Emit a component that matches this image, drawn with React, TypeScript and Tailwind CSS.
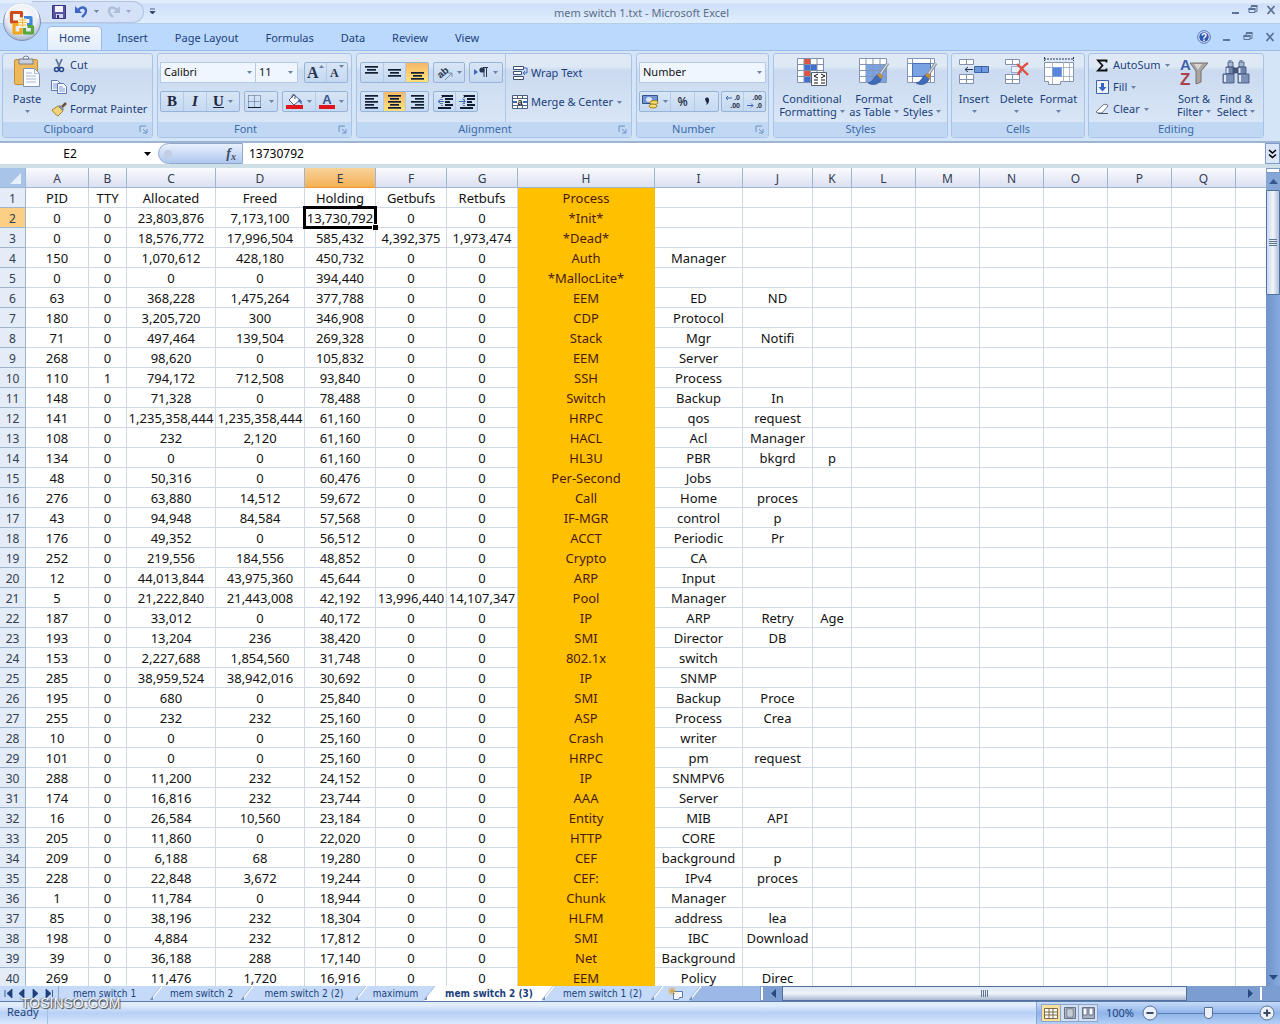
import type { ReactNode } from "react";
import clsx from "clsx";

const columns = [
  { name: "A", width: 63 },
  { name: "B", width: 38 },
  { name: "C", width: 89 },
  { name: "D", width: 89 },
  { name: "E", width: 71 },
  { name: "F", width: 71 },
  { name: "G", width: 71 },
  { name: "H", width: 137 },
  { name: "I", width: 88 },
  { name: "J", width: 70 },
  { name: "K", width: 39 },
  { name: "L", width: 64 },
  { name: "M", width: 64 },
  { name: "N", width: 64 },
  { name: "O", width: 64 },
  { name: "P", width: 64 },
  { name: "Q", width: 64 },
];

const rows = [
  "PID|TTY|Allocated|Freed|Holding|Getbufs|Retbufs|Process",
  "0|0|23,803,876|7,173,100|13,730,792|0|0|*Init*",
  "0|0|18,576,772|17,996,504|585,432|4,392,375|1,973,474|*Dead*",
  "150|0|1,070,612|428,180|450,732|0|0|Auth|Manager",
  "0|0|0|0|394,440|0|0|*MallocLite*",
  "63|0|368,228|1,475,264|377,788|0|0|EEM|ED|ND",
  "180|0|3,205,720|300|346,908|0|0|CDP|Protocol",
  "71|0|497,464|139,504|269,328|0|0|Stack|Mgr|Notifi",
  "268|0|98,620|0|105,832|0|0|EEM|Server",
  "110|1|794,172|712,508|93,840|0|0|SSH|Process",
  "148|0|71,328|0|78,488|0|0|Switch|Backup|In",
  "141|0|1,235,358,444|1,235,358,444|61,160|0|0|HRPC|qos|request",
  "108|0|232|2,120|61,160|0|0|HACL|Acl|Manager",
  "134|0|0|0|61,160|0|0|HL3U|PBR|bkgrd|p",
  "48|0|50,316|0|60,476|0|0|Per-Second|Jobs",
  "276|0|63,880|14,512|59,672|0|0|Call|Home|proces",
  "43|0|94,948|84,584|57,568|0|0|IF-MGR|control|p",
  "176|0|49,352|0|56,512|0|0|ACCT|Periodic|Pr",
  "252|0|219,556|184,556|48,852|0|0|Crypto|CA",
  "12|0|44,013,844|43,975,360|45,644|0|0|ARP|Input",
  "5|0|21,222,840|21,443,008|42,192|13,996,440|14,107,347|Pool|Manager",
  "187|0|33,012|0|40,172|0|0|IP|ARP|Retry|Age",
  "193|0|13,204|236|38,420|0|0|SMI|Director|DB",
  "153|0|2,227,688|1,854,560|31,748|0|0|802.1x|switch",
  "285|0|38,959,524|38,942,016|30,692|0|0|IP|SNMP",
  "195|0|680|0|25,840|0|0|SMI|Backup|Proce",
  "255|0|232|232|25,160|0|0|ASP|Process|Crea",
  "10|0|0|0|25,160|0|0|Crash|writer",
  "101|0|0|0|25,160|0|0|HRPC|pm|request",
  "288|0|11,200|232|24,152|0|0|IP|SNMPV6",
  "174|0|16,816|232|23,744|0|0|AAA|Server",
  "16|0|26,584|10,560|23,184|0|0|Entity|MIB|API",
  "205|0|11,860|0|22,020|0|0|HTTP|CORE",
  "209|0|6,188|68|19,280|0|0|CEF|background|p",
  "228|0|22,848|3,672|19,244|0|0|CEF:|IPv4|proces",
  "1|0|11,784|0|18,944|0|0|Chunk|Manager",
  "85|0|38,196|232|18,304|0|0|HLFM|address|lea",
  "198|0|4,884|232|17,812|0|0|SMI|IBC|Download",
  "39|0|36,188|288|17,140|0|0|Net|Background",
  "269|0|11,476|1,720|16,916|0|0|EEM|Policy|Direc",
].map((line) => line.split("|"));

const ribbonTabs = ["Home", "Insert", "Page Layout", "Formulas", "Data", "Review", "View"];

const sheetTabs = [
  { name: "mem switch 1", width: "w-[91px]" },
  { name: "mem switch 2", width: "w-[79px]" },
  { name: "mem switch 2 (2)", width: "w-[102px]" },
  { name: "maximum", width: "w-[57px]" },
  { name: "mem switch 2 (3)", width: "w-[106px]" },
  { name: "mem switch 1 (2)", width: "w-[97px]" },
];
const activeSheet = "mem switch 2 (3)";

function Caret({ className }: { className?: string }) {
  return (
    <svg viewBox="0 0 5 3" className={clsx("h-[3px] w-[5px] shrink-0 fill-[#6a82a8]", className)} aria-hidden>
      <path d="M0 0h5L2.5 3z" />
    </svg>
  );
}

function Icon({ w, h, children }: { w: number; h: number; children: ReactNode }) {
  return (
    <svg
      width={w}
      height={h}
      viewBox={`0 0 ${w} ${h}`}
      className="shrink-0 overflow-visible font-['Liberation_Sans']"
      aria-hidden
    >
      {children}
    </svg>
  );
}

function Group({
  title,
  width,
  launcher,
  children,
}: {
  title: string;
  width: string;
  launcher?: boolean;
  children: ReactNode;
}) {
  return (
    <section
      className={clsx(
        "flex h-[85px] shrink-0 flex-col overflow-hidden rounded-[3px] border border-[#a9c3e6] bg-gradient-to-b from-[#dfe9f6] from-15% via-[#cbdaef] via-20% to-[#dce9f9]",
        width
      )}
    >
      <div className="flex min-h-0 flex-1">{children}</div>
      <footer
        className={clsx(
          "relative flex h-[15px] items-center justify-center bg-[#c0d8f3] text-[#3e6aaa]",
          launcher && "pr-[18px]"
        )}
      >
        <span>{title}</span>
        {launcher && (
          <button aria-label={`${title} options`} className="absolute right-1">
            <Icon w={9} h={9}>
              <path d="M1 7V1h6M4 4l3 3M8 4v4H4" fill="none" stroke="#6d8fc0" />
            </Icon>
          </button>
        )}
      </footer>
    </section>
  );
}

function Cluster({ children, className }: { children: ReactNode; className?: string }) {
  return (
    <div
      className={clsx(
        "flex h-[21px] items-stretch divide-x divide-[#b3cbe9] rounded-[2px] border border-[#96b3d9] bg-gradient-to-b from-[#d8e5f5] to-[#c5d9f1]",
        className
      )}
    >
      {children}
    </div>
  );
}

function Tool({
  label,
  active,
  className,
  children,
}: {
  label: string;
  active?: boolean;
  className?: string;
  children: ReactNode;
}) {
  return (
    <button
      aria-label={label}
      className={clsx(
        "flex items-center justify-center leading-none",
        active && "bg-gradient-to-b from-[#f5b868] to-[#ffe27a]",
        className ?? "flex-1 gap-1"
      )}
    >
      {children}
    </button>
  );
}

function SmallButton({ icon, label, caret }: { icon: ReactNode; label: string; caret?: boolean }) {
  return (
    <button className="flex h-[22px] items-center gap-[3px] whitespace-nowrap">
      <span className="flex w-4 justify-center">{icon}</span>
      <span>{label}</span>
      {caret && <Caret className="ml-px" />}
    </button>
  );
}

function LargeButton({
  icon,
  lines,
  width,
}: {
  icon: ReactNode;
  lines: [string, string?];
  width: string;
}) {
  return (
    <button className={clsx("flex h-full flex-col items-center pt-[2px] whitespace-nowrap", width)}>
      <span className="flex h-8 items-center">{icon}</span>
      <span className="mt-1 leading-[13px]">{lines[0]}</span>
      <span className="flex h-[13px] items-center gap-[3px] leading-[13px]">
        {lines[1]}
        <Caret />
      </span>
    </button>
  );
}

function Lines({ rows: ys, align = "center" }: { rows: number[]; align?: "left" | "center" | "right" }) {
  return (
    <Icon w={15} h={15}>
      {ys.map((y, i) => {
        const len = i % 2 ? 9 : 13;
        const x = align === "left" ? 1 : align === "right" ? 14 - len : (15 - len) / 2;
        return <rect key={y} x={x} y={y} width={len} height="1.7" fill="#111d33" />;
      })}
    </Icon>
  );
}

function IndentIcon({ flip }: { flip?: boolean }) {
  return (
    <Icon w={16} h={14}>
      <path d="M5 1h11M8 4h8M8 7h5M8 10h8M1 13h13" stroke="#111d33" strokeWidth="1.8" />
      <path d="M5 0v14" stroke="#111d33" strokeDasharray="1 1" />
      <path d={flip ? "M0 6.5h6M3.500 4l3 2.500-3 2.500" : "M7 6.500H1M4 4L1 6.500 4 9"} stroke="#3c69bd" fill="none" />
    </Icon>
  );
}

function OfficeLogo() {
  return (
    <svg viewBox="0 0 40 40" className="size-10" aria-hidden>
      <defs>
        <radialGradient id="orb" cx="50%" cy="35%" r="65%">
          <stop offset="0" stopColor="#ffffff" />
          <stop offset="0.65" stopColor="#e6eaf3" />
          <stop offset="1" stopColor="#a6b4ce" />
        </radialGradient>
      </defs>
      <circle cx="20" cy="20" r="18.500" fill="url(#orb)" stroke="#7f92b4" />
      <path d="M4 16a16 14 0 0 1 32 0" fill="none" stroke="#fff" strokeWidth="2" opacity=".8" />
      <g fill="none" strokeWidth="3.200" strokeLinejoin="round">
        <path d="M16 20H9.500v-9.500h10v5" stroke="#cf4a1c" />
        <path d="M22 15.500h7v7h-4" stroke="#3f86d6" />
        <path d="M18 22.500h-6V31h7v-5" stroke="#f2a81d" />
        <path d="M22.500 26v5h8v-6.500h-5" stroke="#59a63a" />
      </g>
      <rect x="16.500" y="16.500" width="8" height="8" fill="#fff4d0" />
      <path d="M16 20.500h9M20.500 16v9M17 18h7M17 23h7" stroke="#f0b030" strokeWidth=".8" />
    </svg>
  );
}

function WindowButtons({ className }: { className?: string }) {
  return (
    <div className={clsx("flex items-center text-[#5d7396]", className)}>
      <button aria-label="Minimize">
        <Icon w={9} h={10}>
          <path d="M1 8h7" stroke="currentColor" strokeWidth="2" />
        </Icon>
      </button>
      <button aria-label="Restore">
        <Icon w={10} h={10}>
          <path d="M3 3V1.500h6v5H7" fill="none" stroke="currentColor" />
          <path d="M1 3.500h6v4H1z" fill="none" stroke="currentColor" />
          <path d="M3 1h6.500M.5 4h7" stroke="currentColor" strokeWidth="2" />
        </Icon>
      </button>
      <button aria-label="Close">
        <Icon w={10} h={10}>
          <path d="M1.500 1l7 8M8.500 1l-7 8" stroke="currentColor" strokeWidth="1.800" />
        </Icon>
      </button>
    </div>
  );
}

function TitleBar() {
  return (
    <header className="flex h-6 shrink-0 items-center justify-between border-b border-[#b4cdea] bg-gradient-to-b from-[#e2edfd] from-10% via-[#cfdff9] via-20% to-[#e0effd] pl-8">
      <div className="flex h-[22px] w-28 items-center rounded-r-full border border-l-0 border-[#b3c5e3] bg-[#d4e1f6] pl-5">
        <button aria-label="Save" className="mr-[9px]">
          <Icon w={14} h={14}>
            <path d="M.5.5h13v13h-13z" fill="#5a54a8" stroke="#37347e" />
            <path d="M3 1h8v6H3z" fill="#f3f5fd" />
            <path d="M4 9h7v4H4z" fill="#cfd4e8" />
            <path d="M5 10h2v3H5z" fill="#2f2c70" />
          </Icon>
        </button>
        <button aria-label="Undo" className="flex items-center gap-[6px]">
          <Icon w={13} h={13}>
            <path d="M3 5.500C6 1 11 2 11 6c0 3-2 4-4 6" fill="none" stroke="#3f66c0" strokeWidth="2.400" />
            <path d="M0 1v7h7z" fill="#3f66c0" />
          </Icon>
          <Caret />
        </button>
        <button aria-label="Redo" className="ml-2 flex items-center gap-[6px] opacity-60">
          <Icon w={13} h={13}>
            <path d="M10 5.500C7 1 2 2 2 6c0 3 2 4 4 6" fill="none" stroke="#98a9c7" strokeWidth="2.400" />
            <path d="M13 1v7H6z" fill="#98a9c7" />
          </Icon>
          <Caret />
        </button>
      </div>
      <button aria-label="Customize toolbar" className="ml-[5px]">
        <Icon w={7} h={7}>
          <path d="M1 1h5M1 3.500h5L3.500 6z" fill="#2a3f66" stroke="#2a3f66" strokeWidth=".8" />
        </Icon>
      </button>
      <h1 className="flex-1 pt-1 pr-[104px] text-center text-[#5c6c86]">mem switch 1.txt - Microsoft Excel</h1>
      <WindowButtons className="gap-2 pr-1 pb-1" />
    </header>
  );
}

function RibbonTabs() {
  return (
    <nav className="flex h-[26px] shrink-0 items-end bg-[#bbd9fd] pl-12">
      <div className="flex flex-1 items-end gap-[5px]">
        {ribbonTabs.map((tab, i) => (
          <button
            key={tab}
            className={clsx(
              "h-[23px] px-[11px] whitespace-nowrap",
              i === 0 && "rounded-t-[3px] bg-gradient-to-b from-[#f6fafe] to-[#e3edf9] outline outline-[#9fbde4]"
            )}
          >
            {tab}
          </button>
        ))}
      </div>
      <div className="flex h-full items-center gap-[11px] pr-[5px]">
        <button aria-label="Help">
          <Icon w={14} h={14}>
            <circle cx="7" cy="7" r="6.300" fill="#e6eefb" stroke="#4a6cb4" />
            <circle cx="7" cy="7" r="4.800" fill="#2f58b4" />
            <text x="7" y="10.500" textAnchor="middle" fontSize="10" fontWeight="700" fill="#fff">
              ?
            </text>
          </Icon>
        </button>
        <WindowButtons className="gap-3" />
      </div>
    </nav>
  );
}

function ClipboardGroup() {
  return (
    <Group title="Clipboard" width="w-[151px]" launcher>
      <LargeButton
        width="w-12"
        lines={["Paste"]}
        icon={
          <Icon w={28} h={32}>
            <rect x="1.500" y="3.500" width="23" height="25" rx="1.500" fill="#ecb95c" stroke="#c78f35" />
            <path d="M6 3h14v5H6z" fill="#c9cfdb" stroke="#76808f" />
            <path d="M10 3a3 3 0 0 1 6 0z" fill="#eef1f6" stroke="#76808f" />
            <path d="M10.500 12.500h11l5 5v13h-16z" fill="#fbfdff" stroke="#8093b5" />
            <path d="M21.500 12.500v5h5M13 17h6M13 20h10M13 23h10M13 26h10" fill="none" stroke="#a6b8d8" />
          </Icon>
        }
      />
      <div className="flex flex-col">
        <SmallButton
          label="Cut"
          icon={
            <Icon w={14} h={15}>
              <path d="M4 1l4 9M10 1L6 10" stroke="#62779e" strokeWidth="1.800" />
              <circle cx="4.500" cy="11.500" r="2" fill="none" stroke="#2c4888" strokeWidth="1.500" />
              <circle cx="9.500" cy="11.500" r="2" fill="none" stroke="#2c4888" strokeWidth="1.500" />
            </Icon>
          }
        />
        <SmallButton
          label="Copy"
          icon={
            <Icon w={16} h={14}>
              <path d="M.5.5h6l3 3v7h-9z" fill="#f5f9ff" stroke="#5b7bb2" />
              <path d="M2 4h4M2 6h5M2 8h5" stroke="#7c9bd0" />
              <path d="M6.500 3.500h6l3 3v7h-9z" fill="#f5f9ff" stroke="#5b7bb2" />
              <path d="M8 7h4M8 9h6M8 11h6" stroke="#7c9bd0" />
            </Icon>
          }
        />
        <SmallButton
          label="Format Painter"
          icon={
            <Icon w={16} h={15}>
              <path d="M1 8l6-4 5 5-5 5c-2-1-4-3-6-6z" fill="#f2d478" stroke="#a4822f" />
              <path d="M7 4l2-1 4 4-1 2z" fill="#8391a8" />
              <path d="M11 5l4-4" stroke="#6b5533" strokeWidth="2.500" />
            </Icon>
          }
        />
      </div>
    </Group>
  );
}

function FontGroup() {
  return (
    <Group title="Font" width="w-[195px]" launcher>
      <div className="flex flex-1 flex-col gap-2 px-[2px] pt-2">
        <div className="flex items-center">
          <label className="relative flex h-[21px] w-24 items-center border border-[#b3cbe9] bg-[#f0f6ff]">
            <select aria-label="Font" className="h-full w-full appearance-none pl-[3px] text-[#111]">
              <option>Calibri</option>
            </select>
            <Caret className="pointer-events-none absolute right-[3px]" />
          </label>
          <label className="relative flex h-[21px] w-[42px] items-center border border-l-0 border-[#b3cbe9] bg-[#f0f6ff]">
            <select aria-label="Font size" className="h-full w-full appearance-none pl-[3px] text-[#111]">
              <option>11</option>
            </select>
            <Caret className="pointer-events-none absolute right-1" />
          </label>
          <Cluster className="ml-[6px] w-[44px] font-['Liberation_Serif'] font-bold text-[#27344f]">
            <Tool label="Grow font" className="flex-1">
              <span className="text-base leading-none">A</span>
              <Caret className="mb-3 rotate-180" />
            </Tool>
            <Tool label="Shrink font" className="flex-1">
              <span className="text-xs leading-none">A</span>
              <Caret className="mb-3" />
            </Tool>
          </Cluster>
        </div>
        <div className="flex items-center gap-1 font-['Liberation_Serif'] text-[15px] font-bold text-[#1c2740]">
          <Cluster className="w-20">
            <Tool label="Bold" className="w-[23px]">
              B
            </Tool>
            <Tool label="Italic" className="w-[23px] italic">
              I
            </Tool>
            <Tool label="Underline">
              <span className="underline">U</span>
              <Caret />
            </Tool>
          </Cluster>
          <Cluster className="w-[34px]">
            <Tool label="Borders">
              <Icon w={13} h={13}>
                <path d="M.5.5h12v12M.5.5v12M6.500.5v12M.5 6.500h12" fill="none" stroke="#4e6388" strokeDasharray="1 1" />
                <path d="M0 12.500h13" stroke="#111d33" />
              </Icon>
              <Caret className="ml-1" />
            </Tool>
          </Cluster>
          <Cluster className="w-[66px]">
            <Tool label="Fill color">
              <Icon w={17} h={15}>
                <path d="M3 6l5-5 6 5-6 5z" fill="#f7f9fd" stroke="#4b5f85" />
                <path d="M6 4V1.500C6 0 9 0 9 1.500V5" fill="none" stroke="#4b5f85" />
                <path d="M13 5c3 1 3 3 2.500 5.500C14 9 14 8 12 7z" fill="#3d65b0" />
                <path d="M0 11h17v4H0z" fill="#e0141c" />
              </Icon>
              <Caret />
            </Tool>
            <Tool label="Font color">
              <Icon w={16} h={15}>
                <text x="8" y="10" textAnchor="middle" fontSize="13" fill="#3b5591">
                  A
                </text>
                <path d="M0 11h16v4H0z" fill="#e0141c" />
              </Icon>
              <Caret />
            </Tool>
          </Cluster>
        </div>
      </div>
    </Group>
  );
}

function AlignmentGroup() {
  return (
    <Group title="Alignment" width="w-[276px]" launcher>
      <div className="flex w-[149px] flex-col gap-2 border-r border-[#b0c8e6] pt-2 pl-[3px]">
        <div className="flex gap-1">
          <Cluster className="w-[69px]">
            <Tool label="Top align">
              <Lines rows={[1, 4, 7]} />
            </Tool>
            <Tool label="Middle align">
              <Lines rows={[4, 7, 10]} />
            </Tool>
            <Tool label="Bottom align" active>
              <Lines rows={[7, 10, 13]} />
            </Tool>
          </Cluster>
          <Cluster className="w-8">
            <Tool label="Orientation">
              <Icon w={16} h={15}>
                <text x="1" y="11" fontSize="10" fontWeight="700" fill="#26344f" transform="rotate(-40 6 9)">
                  ab
                </text>
                <path d="M8 15l7-7M15 12V8h-4" fill="none" stroke="#7b8ba8" />
              </Icon>
              <Caret />
            </Tool>
          </Cluster>
          <Cluster className="w-[34px]">
            <Tool label="Text direction">
              <Icon w={15} h={13}>
                <path d="M0 3l4 3-4 3z" fill="#3f66c0" />
                <path d="M9 1.500h5M10 1v10M12.500 1v10" stroke="#26344f" fill="none" />
                <circle cx="8" cy="4" r="2.600" fill="#26344f" />
              </Icon>
              <Caret />
            </Tool>
          </Cluster>
        </div>
        <div className="flex gap-1">
          <Cluster className="w-[69px]">
            <Tool label="Align left">
              <Lines rows={[1, 4, 7, 10, 13]} align="left" />
            </Tool>
            <Tool label="Center" active>
              <Lines rows={[1, 4, 7, 10, 13]} />
            </Tool>
            <Tool label="Align right">
              <Lines rows={[1, 4, 7, 10, 13]} align="right" />
            </Tool>
          </Cluster>
          <Cluster className="w-[45px]">
            <Tool label="Decrease indent">
              <IndentIcon />
            </Tool>
            <Tool label="Increase indent">
              <IndentIcon flip />
            </Tool>
          </Cluster>
        </div>
      </div>
      <div className="flex flex-col gap-[7px] pt-2 pl-[6px]">
        <SmallButton
          label="Wrap Text"
          icon={
            <Icon w={16} h={14}>
              <path d="M1.500.5h10v3h-10zM1.500 5.500h8v3h-8zM1.500 10.500h10v3h-10z" fill="#fff" stroke="#3d4f70" />
              <path d="M12 2h3v5h-4M13 5l-2 2 2 2" fill="none" stroke="#3c69bd" />
            </Icon>
          }
        />
        <SmallButton
          label="Merge & Center"
          caret
          icon={
            <Icon w={16} h={14}>
              <path d="M.5.5h15v13H.5zM.5 3.500h15M.5 10.500h15M5.500.5v3M10.500.5v3M5.500 10.500v3M10.500 10.500v3" fill="#fff" stroke="#4c607f" />
              <path d="M1 7h4M15 7h-4" stroke="#3c69bd" strokeWidth="2" />
              <text x="8" y="9.500" textAnchor="middle" fontSize="9" fontWeight="700" fill="#111">
                a
              </text>
            </Icon>
          }
        />
      </div>
    </Group>
  );
}

function NumberGroup() {
  return (
    <Group title="Number" width="w-[133px]" launcher>
      <div className="flex flex-1 flex-col gap-2 px-[2px] pt-2">
        <label className="relative flex h-[21px] items-center border border-[#b3cbe9] bg-[#f0f6ff]">
          <select aria-label="Number format" className="h-full w-full appearance-none pl-[3px] text-[#111]">
            <option>Number</option>
          </select>
          <Caret className="pointer-events-none absolute right-[3px]" />
        </label>
        <div className="flex justify-between">
          <Cluster className="w-20 text-[#1c2740]">
            <Tool label="Accounting format" className="w-[31px] gap-1">
              <Icon w={17} h={15}>
                <path d="M.5 1.500h15v8H.5z" fill="#6f94cf" stroke="#34538c" />
                <ellipse cx="7" cy="5.500" rx="3" ry="2.500" fill="#d9e6fa" />
                <ellipse cx="12" cy="8.500" rx="4" ry="2" fill="#f8dc74" stroke="#a47d1c" />
                <ellipse cx="11" cy="12" rx="4" ry="2" fill="#f8dc74" stroke="#a47d1c" />
              </Icon>
              <Caret />
            </Tool>
            <Tool label="Percent style" className="flex-1 text-xs font-medium">
              %
            </Tool>
            <Tool label="Comma style">
              <Icon w={6} h={10}>
                <path d="M1 2a2 2 0 1 1 4 1c0 3-1 4-3 5 1-2 1-3 0-3z" fill="#1c2740" />
              </Icon>
            </Tool>
          </Cluster>
          <Cluster className="w-[45px] text-[#1c2740]">
            <Tool label="Increase decimal">
              <Icon w={17} h={17}>
                <path d="M8 5H2M4 3L2 5l2 2" fill="none" stroke="#3c69bd" />
                <text x="16" y="7" textAnchor="end" fontSize="7" fontWeight="700" fill="#1c2740">.0</text>
                <text x="16" y="15" textAnchor="end" fontSize="7" fontWeight="700" fill="#1c2740">.00</text>
              </Icon>
            </Tool>
            <Tool label="Decrease decimal">
              <Icon w={17} h={17}>
                <text x="16" y="7" textAnchor="end" fontSize="7" fontWeight="700" fill="#1c2740">.00</text>
                <text x="16" y="15" textAnchor="end" fontSize="7" fontWeight="700" fill="#1c2740">.0</text>
                <path d="M1 12.500h6M5 10.500l2 2-2 2" fill="none" stroke="#3c69bd" />
              </Icon>
            </Tool>
          </Cluster>
        </div>
      </div>
    </Group>
  );
}

function Brush() {
  return (
    <>
      <path d="M30 6l-9 13" stroke="#8a93a3" strokeWidth="3.400" />
      <path d="M30 6l-9 13" stroke="#dfe3ea" strokeWidth="1.200" />
      <path d="M21 17c-5 1-5 8-11 9 5 3 12 2 14-6z" fill="#3f6cb8" stroke="#2c4f8e" strokeWidth=".6" />
      <path d="M19 18l4 4 2-3-3-3z" fill="#c58c3a" />
    </>
  );
}

function StylesGroup() {
  return (
    <Group title="Styles" width="w-[175px]">
      <LargeButton
        width="w-[76px]"
        lines={["Conditional", "Formatting"]}
        icon={
          <Icon w={32} h={30}>
            <path d="M1.500 1.500h26v24h-26z" fill="#fff" />
            <path d="M8 1.500h7v6H8zM8 13.500h7v6H8z" fill="#e4523f" />
            <path d="M8 7.500h13v6H8zM8 19.500h6v6H8z" fill="#3f6fd0" />
            <path d="M1.500 1.500h26v24h-26zM8 1.500v24M14.500 1.500v24M21 1.500v24M1.500 7.500h26M1.500 13.500h26M1.500 19.500h26" fill="none" stroke="#7f8fae" />
            <path d="M15.500 15.500h15v13h-15z" fill="#fff" stroke="#555f70" />
            <path d="M22 17l-4 2 4 2M18 23h4M18 26h4M25 17l4 2-4 2M25 23h4M25 26h4" fill="none" stroke="#111" />
          </Icon>
        }
      />
      <LargeButton
        width="w-12"
        lines={["Format", "as Table"]}
        icon={
          <Icon w={32} h={30}>
            <path d="M1.500 1.500h27v24h-27z" fill="#fff" />
            <path d="M8 7.500h20.500v18H8z" fill="#7aa3e4" />
            <path d="M1.500 1.500h27v24h-27zM8 1.500v24M15 1.500v24M22 1.500v24M1.500 7.500h27M1.500 13.500h27M1.500 19.500h27" fill="none" stroke="#8496b8" />
            <Brush />
          </Icon>
        }
      />
      <LargeButton
        width="w-12"
        lines={["Cell", "Styles"]}
        icon={
          <Icon w={32} h={30}>
            <path d="M1.500 1.500h27v24h-27z" fill="#fff" />
            <path d="M1.500 1.500h27v24h-27zM6.500 1.500v24M1.500 6.500h27M1.500 19.500h27M24.500 1.500v24" fill="none" stroke="#8496b8" />
            <path d="M6.500 6.500h18v13h-18z" fill="#7aa3e4" stroke="#4b70b4" />
            <Brush />
          </Icon>
        }
      />
    </Group>
  );
}

function CellsGroup() {
  return (
    <Group title="Cells" width="w-[134px]">
      <div className="flex flex-1 justify-center pr-1">
        <LargeButton
          width="w-[43px]"
          lines={["Insert"]}
          icon={
            <Icon w={32} h={28}>
              <path d="M1.500 1.500h14v5h-14zM8.500 1.500v5M1.500 16.500h14v9h-14zM8.500 16.500v9M1.500 21.500h14" fill="#fff" stroke="#8292ad" />
              <path d="M16.500 8.500h14v6h-14zM23.500 8.500v6" fill="#6d98e0" stroke="#3e62a6" />
              <path d="M15 11.500H7M10 9l-3 2.500 3 2.500" fill="none" stroke="#26344f" />
            </Icon>
          }
        />
        <LargeButton
          width="w-[42px]"
          lines={["Delete"]}
          icon={
            <Icon w={28} h={28}>
              <path d="M2.500 1.500h14v5h-14zM9.500 1.500v5M2.500 16.500h14v9h-14zM9.500 16.500v9M2.500 21.500h14" fill="#fff" stroke="#8292ad" />
              <path d="M8.500 8.500h10v6h-10z" fill="#e8f0fc" stroke="#4b70b4" strokeDasharray="1 1" />
              <path d="M14 6l11 11M25 5c-5 3-8 7-10 12" stroke="#e2503c" strokeWidth="2.400" fill="none" />
            </Icon>
          }
        />
        <LargeButton
          width="w-[42px]"
          lines={["Format"]}
          icon={
            <Icon w={32} h={30}>
              <path d="M1 2h30M1.500 0v4M30.500 0v4" stroke="#26344f" strokeDasharray="2 1" />
              <path d="M1.500 5.500h29v19h-13v3h-12v-3h-4z" fill="#fff" stroke="#8292ad" />
              <path d="M9.500 5v22M20.500 5v20M1.500 10.500h29M1.500 19.500h29M26.500 5v19" stroke="#a9b6cd" />
              <path d="M9.500 10.500h9v9h-9z" fill="#5685da" stroke="#7fa2e2" />
            </Icon>
          }
        />
      </div>
    </Group>
  );
}

function EditingGroup() {
  return (
    <Group title="Editing" width="w-[176px]">
      <div className="flex w-[83px] flex-col pl-[5px]">
        <SmallButton
          label="AutoSum"
          caret
          icon={
            <Icon w={12} h={13}>
              <path d="M10.500 3.500V1.500H2l4.500 5L2 11.500h8.500v-2" fill="none" stroke="#111" strokeWidth="1.800" />
            </Icon>
          }
        />
        <SmallButton
          label="Fill"
          caret
          icon={
            <Icon w={13} h={14}>
              <path d="M.5.5h12v13H.5z" fill="#edf3fc" stroke="#4462a0" />
              <path d="M5 3h3v4h2.500l-4 4.500L2.500 7H5z" fill="#3664c8" />
            </Icon>
          }
        />
        <SmallButton
          label="Clear"
          caret
          icon={
            <Icon w={15} h={12}>
              <path d="M1 9l7-7c1-1 5-1 5 1L7 10H3z" fill="#fff" stroke="#67758f" />
              <path d="M3 10.500h10" stroke="#4b5870" />
            </Icon>
          }
        />
      </div>
      <LargeButton
        width="w-[44px]"
        lines={["Sort &", "Filter"]}
        icon={
          <Icon w={30} h={30}>
            <path d="M11 6h18l-7 8v11l-5 2V14z" fill="#a9a49f" stroke="#77736f" />
            <path d="M15 7h8l-4 6z" fill="#d7d4d0" />
            <text x="1" y="13" fontSize="15" fontWeight="700" fill="#3f5fae">A</text>
            <text x="1" y="28" fontSize="17" fontWeight="700" fill="#a8434c">Z</text>
          </Icon>
        }
      />
      <LargeButton
        width="w-10"
        lines={["Find &", "Select"]}
        icon={
          <Icon w={28} h={28}>
            <g stroke="#3e4f74" strokeWidth=".8">
              <path d="M6 4h5v5H6zM17 4h5v5h-5z" fill="#a9b7d2" />
              <path d="M4 9h8v7H4zM16 9h8v7h-8z" fill="#6f83ab" />
              <path d="M11 10h6v5h-6z" fill="#42557f" />
              <path d="M1 16h11v9H1zM16 16h11v9H16z" fill="#7c90b8" />
            </g>
            <path d="M3 17v7M18 17v7M5.500 10v5M17.500 10v5" stroke="#dfe7f5" strokeWidth="2" />
            <path d="M8 2v2M19 2v2" stroke="#7c90b8" strokeWidth="3" />
          </Icon>
        }
      />
    </Group>
  );
}

function Ribbon() {
  return (
    <div className="h-[93px] shrink-0 border-t border-b-2 border-t-[#9dbde8] border-b-[#9db5d2] bg-[#d5e5f8] px-[2px] pt-[2px]">
      <div className="flex">
        <div className="flex gap-1">
          <ClipboardGroup />
          <FontGroup />
          <AlignmentGroup />
          <NumberGroup />
        </div>
        <div className="ml-1 flex gap-[3px]">
          <StylesGroup />
          <CellsGroup />
          <EditingGroup />
        </div>
      </div>
    </div>
  );
}

function FormulaBar() {
  return (
    <div className="flex h-[25px] shrink-0 items-stretch border-b-4 border-[#cfdfe8] bg-white text-[12px] text-black">
      <label className="flex w-[158px] items-center">
        <input aria-label="Name box" defaultValue="E2" className="w-[140px] bg-transparent text-center outline-none" />
        <svg viewBox="0 0 7 4" className="ml-1 h-1 w-[7px]" aria-hidden>
          <path d="M0 0h7L3.500 4z" />
        </svg>
      </label>
      <div className="flex w-[85px] items-center justify-between rounded-l-full border border-r border-[#8fa9d0] bg-gradient-to-b from-[#eaf1fd] to-[#afc7ee] pr-[6px]">
        <span className="ml-[5px] size-2 rounded-full bg-[#c3cee4]" />
        <button
          aria-label="Insert function"
          className="font-['Liberation_Serif'] text-sm leading-none font-bold text-[#3f4c66] italic"
        >
          f<sub className="text-[10px]">x</sub>
        </button>
      </div>
      <input aria-label="Formula" defaultValue="13730792" className="min-w-0 flex-1 pl-[6px] outline-none" />
      <button
        aria-label="Expand formula bar"
        className="flex w-[15px] items-center justify-center border border-[#7f9cc9] bg-[#dbe7f8]"
      >
        <Icon w={9} h={10}>
          <path d="M1 1l3.500 3L8 1M1 5.500l3.500 3L8 5.500" fill="none" stroke="#000" strokeWidth="1.600" />
        </Icon>
      </button>
    </div>
  );
}

function Sheet() {
  return (
    <div className="min-w-0 flex-1 overflow-hidden bg-white">
      <table className="w-full table-fixed border-separate border-spacing-0 text-[13px] leading-[17px] text-[#111]">
        <colgroup>
          <col style={{ width: 26 }} />
          {columns.map((col) => (
            <col key={col.name} style={{ width: col.width }} />
          ))}
          <col />
        </colgroup>
        <thead>
          <tr className="h-5 bg-gradient-to-b from-[#fafbfe] to-[#dadff2] text-[12px]">
            <th aria-label="Select all" className="border-r border-b border-[#9eb6ce] bg-[#a9c4e9] p-0">
              <svg viewBox="0 0 25 19" className="block h-[19px] w-[25px]" aria-hidden>
                <path d="M21 5v11H10z" fill="#e6f0fb" />
              </svg>
            </th>
            {columns.map((col) => (
              <th
                key={col.name}
                className={clsx(
                  "border-r border-b border-[#9eb6ce] p-0 pt-[2px] font-normal text-[#333c50]",
                  col.name === "E" && "border-b-[#f29536] bg-gradient-to-b from-[#f9d29a] to-[#f3b153]"
                )}
              >
                {col.name}
              </th>
            ))}
            <th aria-label="R" className="border-b border-[#9eb6ce] p-0" />
          </tr>
        </thead>
        <tbody>
          {rows.map((cells, r) => (
            <tr key={r} className="h-5">
              <th
                scope="row"
                className={clsx(
                  "border-r border-b border-[#9eb6ce] p-0 pt-[2px] text-[12px] font-normal text-[#333c50]",
                  r === 1 ? "bg-[#fbcf85]" : "bg-[#e4ecf7]"
                )}
              >
                {r + 1}
              </th>
              {columns.map((col, c) => {
                const selected = r === 1 && col.name === "E";
                return (
                  <td
                    key={col.name}
                    className={clsx(
                      "border-r border-b p-0 pt-[2px] text-center whitespace-nowrap",
                      col.name === "H" ? "border-[#ffc000] bg-[#ffc000] text-[#4a1a10]" : "border-[#d0d7e5]",
                      selected && "relative"
                    )}
                  >
                    {cells[c]}
                    {selected && (
                      <span className="absolute -inset-x-[2px] -top-[2px] -bottom-[2px] border-[3px] border-black">
                        <span className="absolute -right-1 -bottom-1 size-[6px] border-t border-l border-white bg-black" />
                      </span>
                    )}
                  </td>
                );
              })}
              <td className="border-b border-[#d0d7e5] p-0" />
            </tr>
          ))}
        </tbody>
      </table>
    </div>
  );
}

function VerticalScroll() {
  return (
    <div className="flex w-[14px] shrink-0 flex-col items-stretch bg-gradient-to-r from-[#6e94cb] to-[#86aadd]">
      <div className="h-[5px] border border-[#7f9cc9] bg-white" />
      <button aria-label="Scroll up" className="flex h-[17px] items-center justify-center bg-[#86a6d6]">
        <svg viewBox="0 0 9 5" className="h-[5px] w-[9px] fill-[#35568f]">
          <path d="M0 5h9L4.500 0z" />
        </svg>
      </button>
      <div className="flex h-[105px] flex-col items-center justify-center gap-px rounded-[1px] border border-[#53719f] bg-gradient-to-r from-[#c7d8f0] via-[#f2f6fc] to-[#aebfd9]">
        {[0, 1, 2, 3].map((n) => (
          <span key={n} className="h-px w-2 bg-[#5f7392]" />
        ))}
      </div>
      <div className="flex-1" />
      <button aria-label="Scroll down" className="flex h-[17px] items-center justify-center">
        <svg viewBox="0 0 9 5" className="h-[5px] w-[9px] fill-[#274982]">
          <path d="M0 0h9L4.500 5z" />
        </svg>
      </button>
    </div>
  );
}

function TabEdge({ left, right }: { left: string; right: string }) {
  return (
    <svg viewBox="0 0 12 15" className="h-[15px] w-3 shrink-0" aria-hidden>
      <path d="M0 0h12L0 15z" fill={left} />
      <path d="M12 0v15H0z" fill={right} />
      <path d="M12 0L1 14" stroke="#fff" strokeWidth="1.500" />
      <path d="M11 0L0 14" stroke="#8fa9d0" strokeWidth=".7" />
      <path d="M0 14l3-4v4z" fill="#7c93b8" />
    </svg>
  );
}

function SheetBar() {
  const tone = (name?: string) => (name === activeSheet ? "#ffffff" : "#c4daf8");
  return (
    <div className="flex h-4 shrink-0 items-stretch border-b border-[#5b7cab] bg-[#9bb8e6] font-['DejaVu_Sans_Condensed'] text-[10px]">
      <div className="flex w-[59px] items-center justify-around border-r border-[#8fa9d0] bg-[#c4daf8] px-[2px]">
        {["M1 1v7M8 0v9L3 4.500z", "M6 0v9L1 4.500z", "M2 0v9l5-4.500z", "M7.500 1v7M1 0v9l5-4.500z"].map((d, i) => (
          <button key={d} aria-label={["First", "Previous", "Next", "Last"][i] + " sheet"}>
            <Icon w={9} h={9}>
              <path d={d} fill="#1f3f7a" stroke="#1f3f7a" strokeWidth=".8" />
            </Icon>
          </button>
        ))}
      </div>
      {sheetTabs.map((tab, i) => (
        <div key={tab.name} className="flex shrink-0">
          <button
            className={clsx(
              "leading-[14px] whitespace-nowrap",
              tab.width,
              tab.name === activeSheet ? "bg-white font-bold" : "bg-[#c4daf8]"
            )}
          >
            {tab.name}
          </button>
          <TabEdge left={tone(tab.name)} right={tone(sheetTabs[i + 1]?.name)} />
        </div>
      ))}
      <button aria-label="Insert worksheet" className="flex w-[26px] items-center justify-center bg-[#c4daf8]">
        <Icon w={16} h={13}>
          <path d="M5.500 4.500h9v6h-3l-1 2h-5z" fill="#f5f9ff" stroke="#5b7bb2" />
          <path d="M4 0v8M0 4h8M1 1l6 6M7 1L1 7" stroke="#e0a030" />
        </Icon>
      </button>
      <TabEdge left="#c4daf8" right="#9bb8e6" />
      <div className="min-w-4 flex-1" />
      <div className="w-1 border border-[#7f9cc9] bg-white" />
      <button aria-label="Scroll left" className="flex w-[18px] items-center justify-center bg-[#7c9dd0]">
        <svg viewBox="0 0 5 9" className="h-[9px] w-[5px] fill-[#274982]">
          <path d="M5 0v9L0 4.500z" />
        </svg>
      </button>
      <div className="flex w-[405px] items-center justify-center gap-px border border-[#53719f] bg-gradient-to-b from-[#dde8f8] via-[#eef3fa] to-[#a9b9d0]">
        {[0, 1, 2, 3].map((n) => (
          <span key={n} className="h-[7px] w-px bg-[#5f7392]" />
        ))}
      </div>
      <button aria-label="Scroll right" className="flex w-[72px] items-center justify-end bg-[#7c9dd0] pr-[6px]">
        <svg viewBox="0 0 5 9" className="h-[9px] w-[5px] fill-[#274982]">
          <path d="M0 0v9l5-4.500z" />
        </svg>
      </button>
      <div className="w-1 border border-[#7f9cc9] bg-white" />
      <div className="w-[17px] bg-[#7c9dd0]" />
    </div>
  );
}

function ZoomButton({ label, d }: { label: string; d: string }) {
  return (
    <button aria-label={label}>
      <Icon w={16} h={16}>
        <circle cx="8" cy="8" r="7" fill="#eaf1fb" stroke="#5b6f90" />
        <path d={d} stroke="#3c4a63" strokeWidth="2" />
      </Icon>
    </button>
  );
}

function StatusBar() {
  return (
    <footer className="flex h-[22px] shrink-0 items-center justify-between bg-gradient-to-b from-[#e2edfc] from-15% via-[#b6d0f6] via-50% to-[#dbe9fc]">
      <span className="h-full border-r border-[#a5c0e6] pr-2 pl-[7px] leading-5">Ready</span>
      <div className="flex h-full items-center border-l border-[#86a5d3] bg-gradient-to-b from-[#c6dbf8] via-[#8fb4ea] to-[#b3cff5] pr-[5px] pl-1">
        <div className="flex h-[18px] w-[57px] divide-x divide-[#8ea6cb] border border-[#8ea6cb] bg-[#d3e0f3]">
          <Tool label="Normal view" className="flex-1 bg-[#fbdf9c]">
            <Icon w={14} h={11}>
              <path d="M.5.5h13v10H.5zM5 .5v10M9 .5v10M.5 4h13M.5 7h13" fill="#fff" stroke="#7b6a45" />
            </Icon>
          </Tool>
          <Tool label="Page layout view">
            <Icon w={12} h={12}>
              <path d="M.5.5h11v11H.5z" fill="#a8b1be" stroke="#68748a" />
              <path d="M3 2h6v8H3z" fill="#fff" stroke="#68748a" />
              <path d="M4 4h4M4 6h4M4 8h4" stroke="#8d99ac" />
            </Icon>
          </Tool>
          <Tool label="Page break view">
            <Icon w={13} h={12}>
              <path d="M.5.5h12v11H.5z" fill="#a8b1be" stroke="#68748a" />
              <path d="M1 1h4v7H1zM7 1h4v7H7z" fill="#fff" stroke="#68748a" />
            </Icon>
          </Tool>
        </div>
        <button className="w-11 text-center">100%</button>
        <ZoomButton label="Zoom out" d="M4.500 8h7" />
        <input
          type="range"
          aria-label="Zoom"
          min={0}
          max={100}
          defaultValue={50}
          className="h-4 w-[101px] appearance-none bg-[linear-gradient(#5f7fb3,#5f7fb3)] bg-[length:100%_1px] bg-center bg-no-repeat [&::-webkit-slider-thumb]:h-3 [&::-webkit-slider-thumb]:w-[9px] [&::-webkit-slider-thumb]:appearance-none [&::-webkit-slider-thumb]:rounded-b-[4px] [&::-webkit-slider-thumb]:border [&::-webkit-slider-thumb]:border-[#5b6f90] [&::-webkit-slider-thumb]:bg-[#eaf1fb]"
        />
        <ZoomButton label="Zoom in" d="M4.500 8h7M8 4.500v7" />
      </div>
    </footer>
  );
}

export default function App() {
  return (
    <div className="relative flex h-screen flex-col overflow-hidden bg-[#bbd9fd] font-['Noto_Sans',sans-serif] text-[11px] text-[#1b3f7c]">
      <TitleBar />
      <RibbonTabs />
      <button aria-label="Office menu" className="absolute top-[2px] left-[2px]">
        <OfficeLogo />
      </button>
      <Ribbon />
      <FormulaBar />
      <main className="flex min-h-0 flex-1">
        <Sheet />
        <VerticalScroll />
      </main>
      <SheetBar />
      <StatusBar />
      <span className="pointer-events-none absolute bottom-[11px] left-[21px] font-['Liberation_Sans'] text-sm text-[#eef2f8] [text-shadow:1px_1px_1px_#444,-1px_0_1px_#777]">
        TOSINSO.COM
      </span>
    </div>
  );
}
